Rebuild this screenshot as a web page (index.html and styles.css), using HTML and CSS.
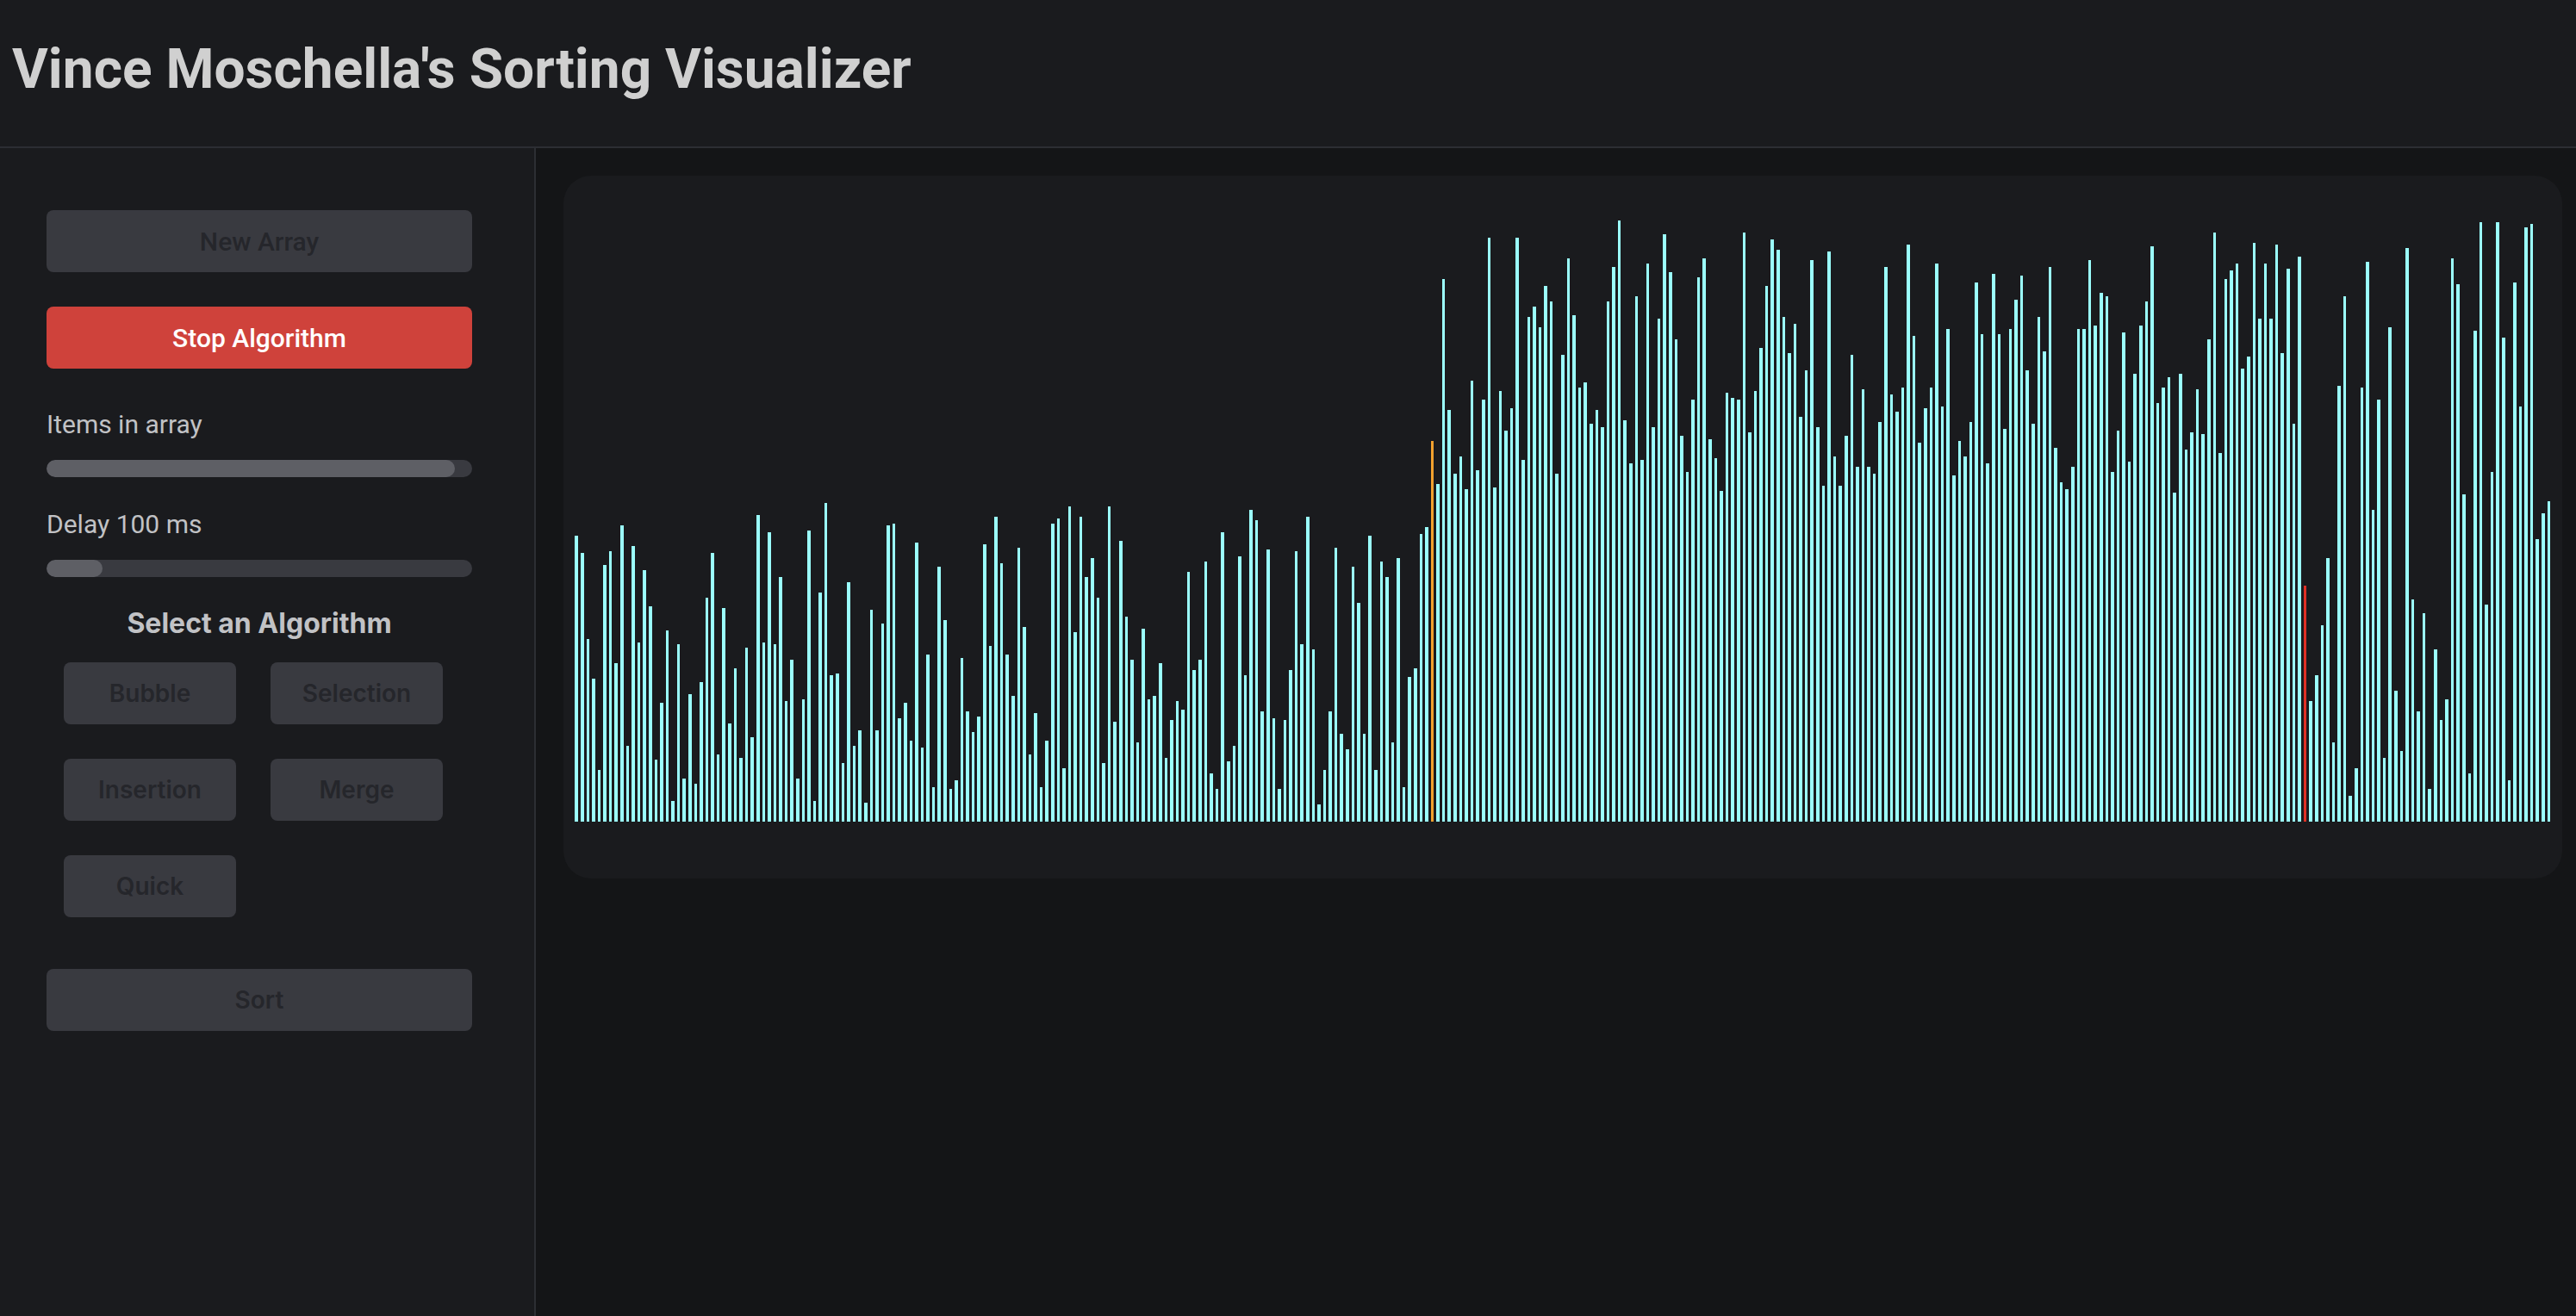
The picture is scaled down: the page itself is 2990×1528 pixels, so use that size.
FILE: index.html
```html
<!DOCTYPE html>
<html lang="en">
<head>
<meta charset="utf-8">
<title>Vince Moschella's Sorting Visualizer</title>
<link rel="stylesheet" href="styles.css">
</head>
<body>
<div class="app">
  <header class="header">
    <h1 class="title">Vince Moschella's Sorting Visualizer</h1>
  </header>
  <div class="body">
    <aside class="sidebar">
      <button class="btn btn-top" disabled>New Array</button>
      <button class="btn btn-top btn-stop">Stop Algorithm</button>
      <div class="field field-items">
        <div class="label">Items in array</div>
        <div class="track"><div class="fill fill-items"></div></div>
      </div>
      <div class="field field-delay">
        <div class="label">Delay 100 ms</div>
        <div class="track"><div class="fill fill-delay"></div></div>
      </div>
      <h2 class="heading">Select an Algorithm</h2>
      <div class="algos">
        <button class="btn" disabled>Bubble</button>
        <button class="btn" disabled>Selection</button>
        <button class="btn" disabled>Insertion</button>
        <button class="btn" disabled>Merge</button>
        <button class="btn" disabled>Quick</button>
      </div>
      <button class="btn btn-sort" disabled>Sort</button>
    </aside>
    <main class="main">
      <section class="card">
        <div class="bars" id="bars"></div>
      </section>
    </main>
  </div>
</div>
<script src="script.js"></script>
</body>
</html>
```

FILE: styles.css
```css
* { box-sizing: border-box; }
html, body { margin: 0; height: 100%; overflow: hidden; }
body {
  background: #141517;
  color: #c1c2c5;
  font-family: Inter, Roboto, "Liberation Sans", sans-serif;
}
.app { display: flex; flex-direction: column; height: 100vh; }
.header {
  height: 172px;
  flex: none;
  display: flex;
  align-items: center;
  padding: 0 0 10px 14px;
  background: #1a1b1e;
  border-bottom: 2px solid #2c2e33;
}
.title {
  margin: 0;
  font-family: Roboto, Inter, sans-serif;
  font-size: 64px;
  font-weight: 700;
  color: #d0d0d0;
}
.body { flex: 1; display: flex; min-height: 0; }
.sidebar {
  width: 622px;
  flex: none;
  display: flex;
  flex-direction: column;
  padding: 72px 72px 0 54px;
  background: #1a1b1e;
  border-right: 2px solid #2c2e33;
}
.btn {
  height: 72px;
  border: 0;
  border-radius: 8px;
  background: #393a40;
  color: #25262b;
  font-family: Inter, Roboto, sans-serif;
  font-size: 28px;
  font-weight: 600;
  padding: 0;
}
.btn-top { font-family: Roboto, Inter, sans-serif; font-size: 30px; font-weight: 500; }
.btn-stop { margin-top: 40px; background: #cf423b; color: #fff; }
.field-items { margin-top: 48px; }
.field-delay { margin-top: 38px; }
.label { font-family: Roboto, Inter, sans-serif; font-size: 30px; line-height: 34px; color: #c1c2c5; }
.track { height: 20px; margin-top: 24px; border-radius: 10px; background: #393a40; overflow: hidden; }
.fill { height: 100%; border-radius: 10px; background: #5e5f65; }
.fill-items { width: 474px; }
.fill-delay { width: 65px; }
.heading {
  margin: 34px 0 0;
  text-align: center;
  font-size: 32px;
  line-height: 40px;
  font-weight: 700;
  color: #c1c2c5;
}
.algos {
  display: grid;
  grid-template-columns: 200px 200px;
  column-gap: 40px;
  row-gap: 40px;
  margin-top: 25px;
  padding-left: 20px;
}
.btn-sort { margin-top: 60px; }
.main { flex: 1; min-width: 0; padding: 32px 16px 0 32px; }
.card {
  height: 816px;
  padding: 50px 0 66px 11.95px;
  border-radius: 32px;
  background: #1a1b1e;
}
.bars { height: 700px; display: flex; align-items: flex-end; }
.bar { width: 3.578125px; margin: 0 1.5px; flex: none; background: #9bfffd; }
.bar-orange { background: #f2a12e; }
.bar-red { background: #e03126; }
```

FILE: script.js
```js
// Bar tops as sampled, per stretch of the array, with the scale they were sampled at.
var groups = [
  { bottom: 1122, scale: 3, tops: [126,186,486,624,942,228,180,570,90,858,162,498,246,372,906,708,456,1050,504,972,678,990,636,342,186,888,378,780,588,900,516,828,54,498,114,504,270,702,558,972,696,108,1050,324,12,612,606,918,288,858,804,1056,384,804,432,90,84,762,708,840,150,864,540,1002,234,420,1008,978,552,738,810,756,156,510,60] },
  { bottom: 1494, scale: 2.063, tops: [875,1093,1193,838,1027,1333,1234,1411,1300,780,767,1366,739,1040,763,908,862,957,1353,739,1254,821,1003,1106,1304,1032,1201,1193,1114,1341,1250,1205,1226,895,1131,1106,871,1378,1415,801,1349,1312,858,1143,747,772,1230,842,1246,1415,1250,1131,846,1069,763,1081,1452,1370,1230,838,1283,1320,883,970,1283,809,1370,871,908,1304,862,1411,1147,1126,805,788,582,685,194,508,660,619,697,437,652,483,95,693,462,557] },
  { bottom: 1494, scale: 2.063, tops: [503,95,627,285,260,309,210,248,660,375,144,281,454,442,541,508,549,248,165,54,532,635,235,627,157,549,289,87,177,338,569,656,483,190,144,578,623,701,466,479,483,83,561,462,359,210,99,124,285,371,301,524,413,149,549,689,128,619,689,569,375,644,458,644,660,536,165,470,512,454,111,330,586,503,454,157,499,314,664,582,619,536,202,326,635,182,326,553,314,243,186] },
  { bottom: 1409, scale: 1.8447, tops: [443,557,328,402,221,609,683,697,649,354,354,207,347,277,284,660,572,362,638,450,347,295,177,513,480,457,705,450,612,576,483,579,376,148,620,247,229,214,439,413,170,332,214,332,173,406,225,557,199,904,1151,1096,989,845,1240,476,284,1354,1295,480,210,742,505,1273,350,1129,1258,181,933,1173,963,1339,1040,1192,1147,203,258,708,1306,358,125,944,660,125,373,1321,255,520,137,129,804,749,723] }
];
var ORANGE = 75 + 76;
var RED = 75 + 90 + 91 + 49;
var root = document.getElementById('bars');
var index = 0;
groups.forEach(function (g) {
  g.tops.forEach(function (top) {
    var bar = document.createElement('div');
    bar.className = 'bar';
    if (index === ORANGE) bar.className += ' bar-orange';
    if (index === RED) bar.className += ' bar-red';
    bar.style.height = Math.round((g.bottom - top) / g.scale) + 'px';
    root.appendChild(bar);
    index++;
  });
});
```
